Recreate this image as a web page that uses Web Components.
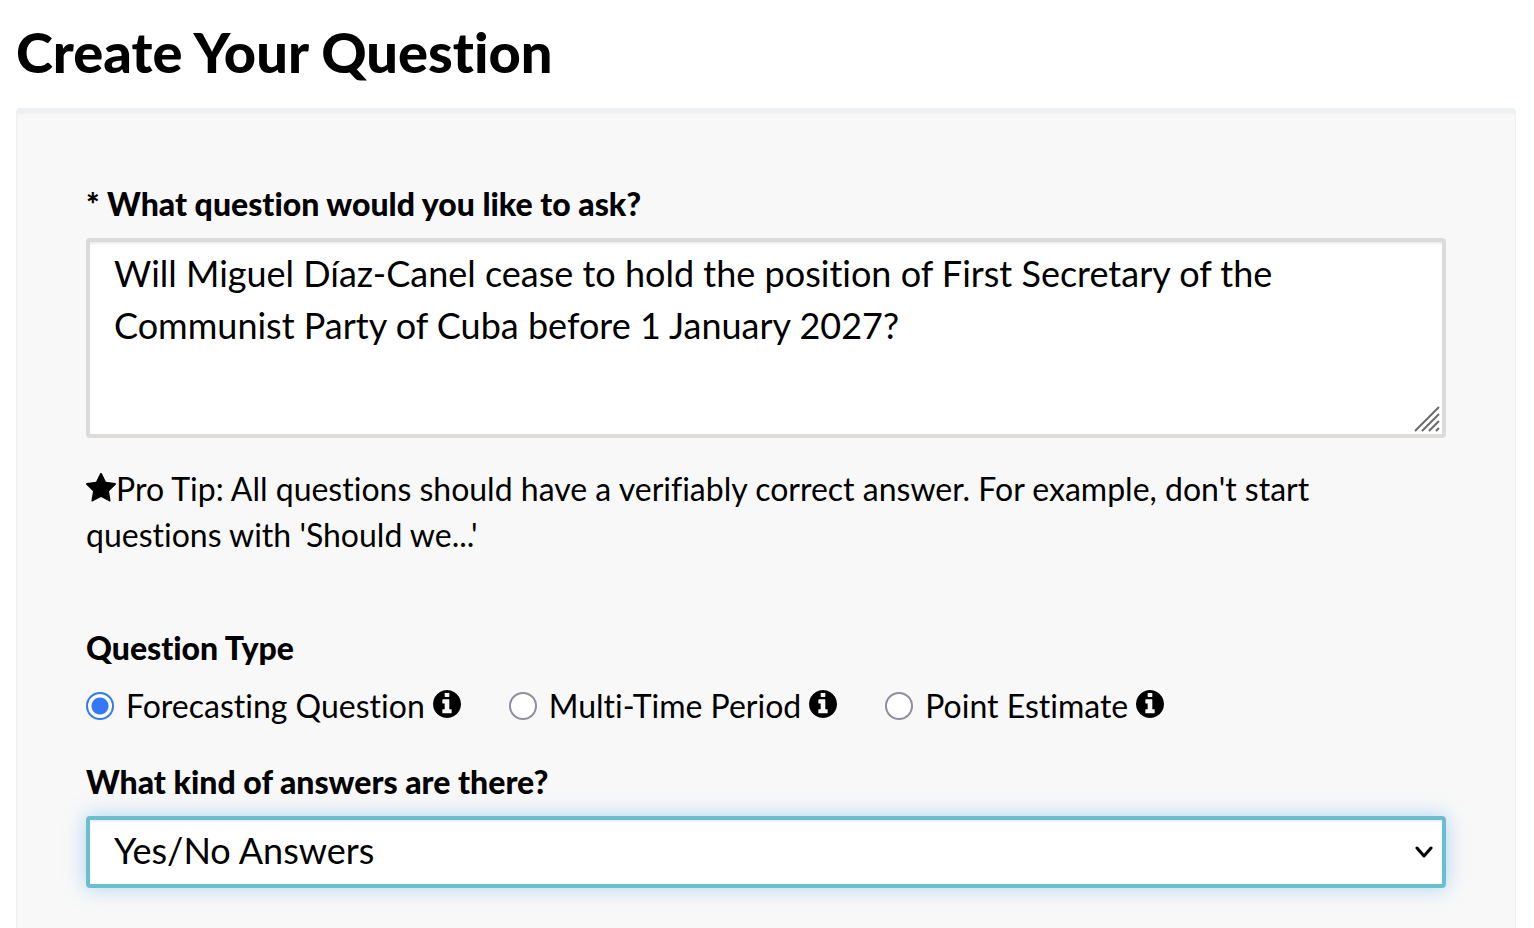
<!DOCTYPE html>
<html lang="en">
<head>
<meta charset="utf-8">
<meta name="viewport" content="width=device-width, initial-scale=1">
<title>Create Your Question</title>
<style>
  body {
    margin: 0;
    background: #fff;
    color: #000;
    font-family: Lato, "Open Sans", sans-serif;
    font-size: 32px;
    font-variant-ligatures: none;
    line-height: 46px;
  }
</style>
</head>
<body>
<question-page>
  <span slot="title">Create Your Question</span>
  <question-text label="* What question would you like to ask?">Will Miguel Díaz-Canel cease to hold the position of First Secretary of the Communist Party of Cuba before 1 January 2027?</question-text>
  <pro-tip>Pro Tip: All questions should have a verifiably correct answer. For example, don't start questions with 'Should we...'</pro-tip>
  <question-type label="Question Type" options="Forecasting Question|Multi-Time Period|Point Estimate"></question-type>
  <answer-kind label="What kind of answers are there?" options="Yes/No Answers|Multiple Choice Answers"></answer-kind>
</question-page>

<script>
const fieldStyles = `
  :host {
    display: block;
  }
  * {
    box-sizing: border-box;
  }
  .label {
    display: block;
    padding: 0;
    font-size: 32px;
    font-weight: 900;
    line-height: 46px;
  }
  .control {
    display: block;
    width: 100%;
    margin: 0;
    border: 4px solid #dcdbd9;
    border-radius: 4px;
    background: #fff;
    box-shadow: inset 0 2px 2px rgba(0, 0, 0, 0.07);
    color: inherit;
    font-family: inherit;
    font-size: 36px;
    font-variant-ligatures: none;
    line-height: 52px;
    outline: none;
  }
`;

class QuestionPage extends HTMLElement {
  constructor() {
    super();
    this.attachShadow({ mode: "open" });
  }

  connectedCallback() {
    this.shadowRoot.innerHTML = `
    <style>
      :host {
        display: flex;
        flex-direction: column;
        box-sizing: border-box;
        min-height: 100vh;
        padding: 18px 18px 0 16px;
      }
      h1 {
        margin: 0 0 22px;
        font-size: 56px;
        font-weight: 900;
        line-height: 68px;
      }
      main {
        flex: 1;
        padding: 69px 69px 40px;
        border: 1px solid #f0f0f0;
        border-top: 4px solid #edf1f1;
        border-bottom: 0;
        border-radius: 4px 4px 0 0;
        background: #f8f8f8;
        box-shadow: inset 0 2px 2px rgba(0, 0, 0, 0.04);
      }
    </style>
    <h1><slot name="title"></slot></h1>
    <main><slot></slot></main>
    `;
  }
}

class QuestionText extends HTMLElement {
  constructor() {
    super();
    this.attachShadow({ mode: "open" });
  }

  connectedCallback() {
    this.shadowRoot.innerHTML = `
    <style>
      ${fieldStyles}
      .label {
        margin-bottom: 11px;
      }
      .box {
        position: relative;
      }
      textarea {
        padding: 5px 24px 31px;
        resize: none;
        overflow: hidden;
      }
      svg {
        position: absolute;
        right: 6px;
        bottom: 6px;
        pointer-events: none;
      }
    </style>
    <label class="label" for="question"></label>
    <div class="box">
      <textarea class="control" id="question" rows="3"></textarea>
      <svg width="26" height="26" viewBox="0 0 26 26" stroke="#6b6b6b" stroke-width="2" aria-hidden="true">
        <path d="M1 25 25 1M8 25 25 8M15 25 25 15M22 25 25 22"/>
      </svg>
    </div>
    `;
    this.shadowRoot.querySelector("label").textContent = this.getAttribute("label");
    this.shadowRoot.querySelector("textarea").value = this.textContent;
  }
}

class ProTip extends HTMLElement {
  constructor() {
    super();
    this.attachShadow({ mode: "open" });
  }

  connectedCallback() {
    this.shadowRoot.innerHTML = `
    <style>
      :host {
        display: block;
        margin-top: 28px;
      }
      p {
        margin: 0;
      }
      svg {
        vertical-align: -2px;
      }
    </style>
    <p><svg width="30" height="30" viewBox="0 100 1664 1550" aria-hidden="true"><path d="M1664 647q0 22-26 48l-363 354 86 500q1 7 1 20 0 21-10.500 35.500t-30.500 14.500q-19 0-40-12l-449-236-449 236q-22 12-40 12-21 0-31.500-14.500t-10.500-35.500q0-6 2-20l86-500-364-354q-25-27-25-48 0-37 56-46l502-73 225-455q19-41 49-41t49 41l225 455 502 73q56 9 56 46z"/></svg><slot></slot></p>
    `;
  }
}

class InfoIcon extends HTMLElement {
  constructor() {
    super();
    this.attachShadow({ mode: "open" });
  }

  connectedCallback() {
    this.shadowRoot.innerHTML = `
    <style>
      :host {
        display: block;
        width: 28px;
        height: 28px;
      }
      svg {
        display: block;
      }
    </style>
    <svg width="28" height="28" viewBox="0 0 1536 1536" aria-hidden="true"><path d="M1024 1248v-160q0-14-9-23t-23-9h-96v-512q0-14-9-23t-23-9h-320q-14 0-23 9t-9 23v160q0 14 9 23t23 9h96v320h-96q-14 0-23 9t-9 23v160q0 14 9 23t23 9h448q14 0 23-9t9-23zm-128-896v-160q0-14-9-23t-23-9h-192q-14 0-23 9t-9 23v160q0 14 9 23t23 9h192q14 0 23-9t9-23zm640 416q0 209-103 385.500t-279.500 279.500-385.500 103-385.500-103-279.500-279.500-103-385.500 103-385.500 279.500-279.500 385.500-103 385.500 103 279.500 279.500 103 385.500z"/></svg>
    `;
  }
}

class QuestionType extends HTMLElement {
  constructor() {
    super();
    this.attachShadow({ mode: "open" });
  }

  connectedCallback() {
    const options = this.getAttribute("options").split("|");
    this.shadowRoot.innerHTML = `
    <style>
      ${fieldStyles}
      :host {
        margin-top: 67px;
      }
      fieldset {
        min-width: 0;
        margin: 0;
        padding: 0;
        border: 0;
      }
      .options {
        display: flex;
        flex-wrap: wrap;
        gap: 0 48px;
        margin-top: 12px;
      }
      .option {
        display: flex;
        align-items: center;
        gap: 8px;
      }
      .option label {
        display: flex;
        align-items: center;
        gap: 12px;
      }
      input {
        appearance: none;
        width: 28px;
        height: 28px;
        margin: 0;
        border: 2px solid #8f8f9d;
        border-radius: 50%;
        background: #fff;
      }
      input:checked {
        border-color: #3478f6;
        background: radial-gradient(circle, #3478f6 8px, #fff 9px);
      }
      info-icon {
        margin-bottom: 4px;
      }
    </style>
    <fieldset>
      <legend class="label">${this.getAttribute("label")}</legend>
      <div class="options">
        ${options.map((text, i) => `
        <div class="option">
          <label for="type-${i}"><input id="type-${i}" name="type" type="radio"${i === 0 ? " checked" : ""}><span>${text}</span></label>
          <info-icon></info-icon>
        </div>`).join("")}
      </div>
    </fieldset>
    `;
  }
}

class AnswerKind extends HTMLElement {
  constructor() {
    super();
    this.attachShadow({ mode: "open" });
  }

  connectedCallback() {
    const options = this.getAttribute("options").split("|");
    this.shadowRoot.innerHTML = `
    <style>
      ${fieldStyles}
      :host {
        margin-top: 30px;
      }
      .label {
        margin-bottom: 11px;
      }
      .box {
        position: relative;
      }
      select.control {
        appearance: none;
        height: 72px;
        padding: 0 56px 4px 24px;
        border-color: #68bfcd;
        box-shadow: inset 0 2px 2px rgba(0, 0, 0, 0.07), 0 0 20px rgba(102, 175, 233, 0.5);
      }
      svg {
        position: absolute;
        right: 13px;
        top: 30px;
        pointer-events: none;
      }
    </style>
    <label class="label" for="kind">${this.getAttribute("label")}</label>
    <div class="box">
      <select class="control" id="kind">
        ${options.map((text) => `<option>${text}</option>`).join("")}
      </select>
      <svg width="18" height="13" viewBox="0 0 18 13" fill="none" stroke="#000" stroke-width="3" stroke-linecap="round" stroke-linejoin="round" aria-hidden="true">
        <path d="M2 2 9 10 16 2"/>
      </svg>
    </div>
    `;
  }
}

customElements.define("info-icon", InfoIcon);
customElements.define("question-page", QuestionPage);
customElements.define("question-text", QuestionText);
customElements.define("pro-tip", ProTip);
customElements.define("question-type", QuestionType);
customElements.define("answer-kind", AnswerKind);
</script>
</body>
</html>
